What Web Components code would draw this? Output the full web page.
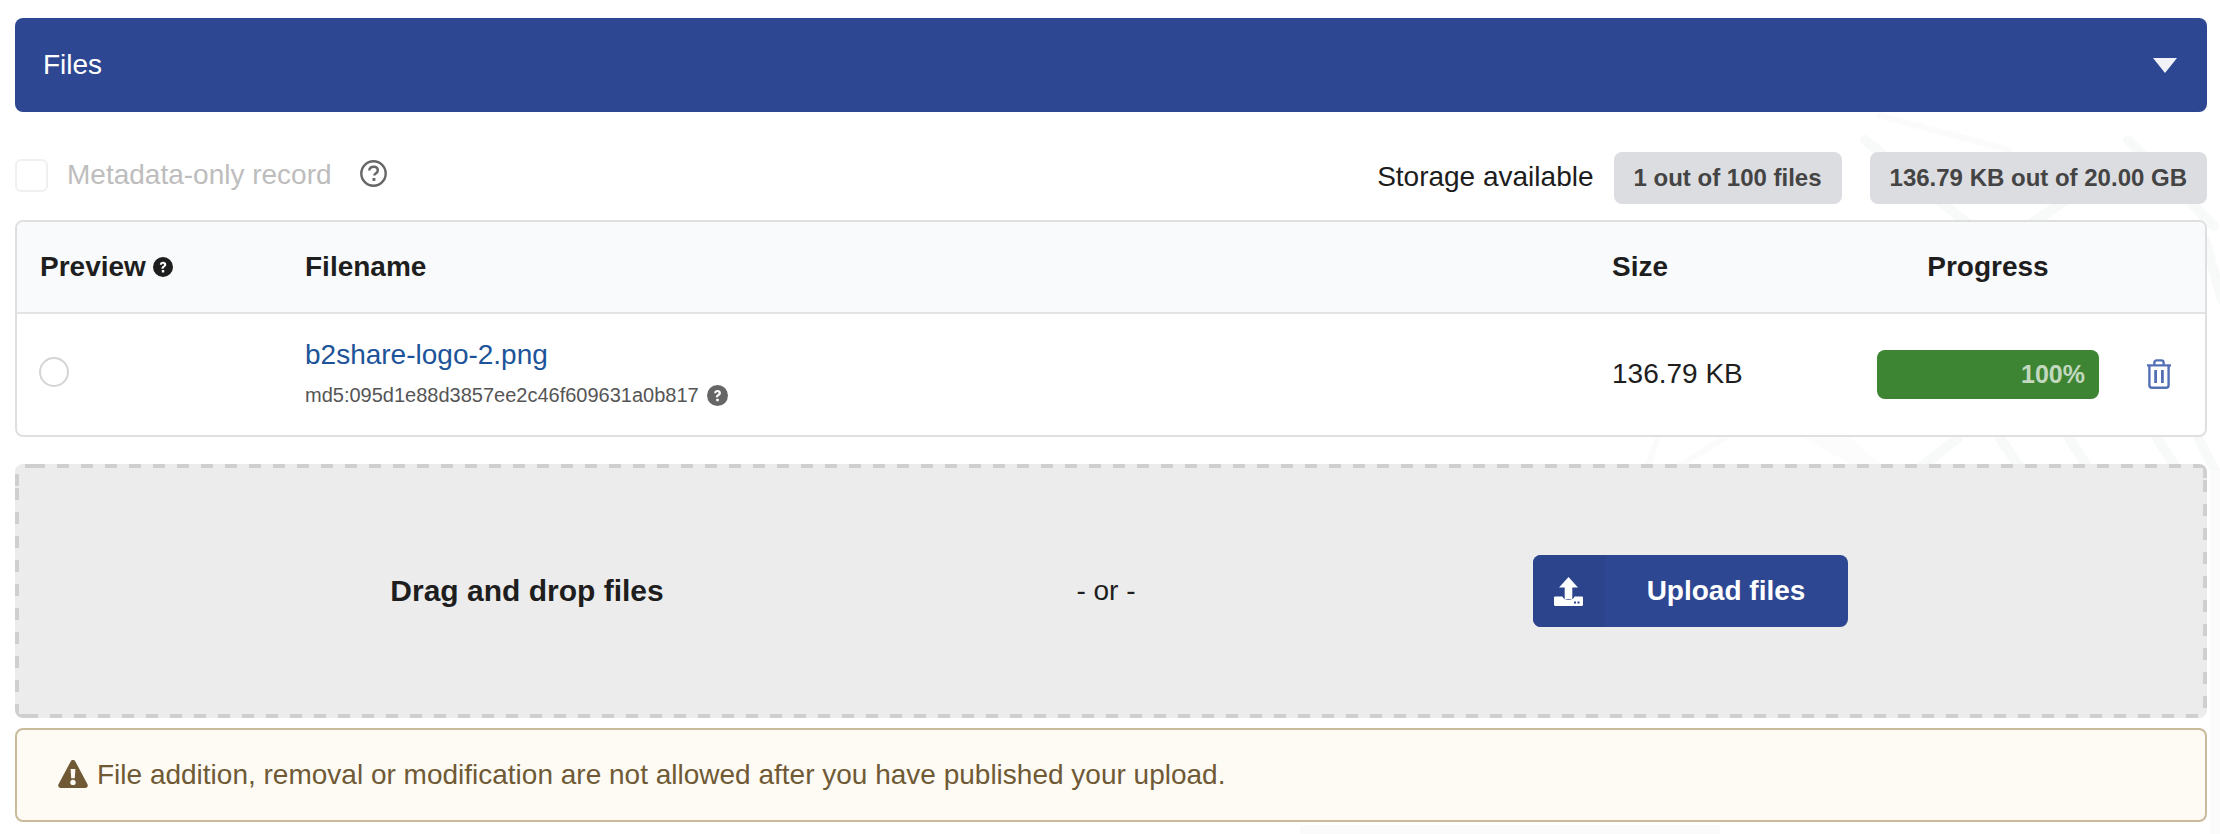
<!DOCTYPE html>
<html>
<head>
<meta charset="utf-8">
<title>Files</title>
<style>
  html, body { margin: 0; background: #fff; }
  body {
    font-family: "Liberation Sans", Arial, sans-serif;
    font-size: 28px;
    color: #1e1e1e;
  }
</style>
</head>
<body>
<files-page>
  <files-header>Files</files-header>
  <files-toolbar></files-toolbar>
  <files-table></files-table>
  <drop-zone></drop-zone>
  <warning-note>File addition, removal or modification are not allowed after you have published your upload.</warning-note>
</files-page>

<script>
const helpIcon = (size, color) => `
  <svg width="${size}" height="${size}" viewBox="0 0 24 24" style="display:block;flex:none">
    <circle cx="12" cy="12" r="12" fill="${color}"/>
    <path d="M8.200 9.400c0-2.200 1.700-3.600 3.900-3.600s3.800 1.300 3.800 3.300c0 1.600-.9 2.400-2 3.100-.9.600-1.200.9-1.200 1.800h-2.600c0-1.700.6-2.400 1.800-3.200.9-.6 1.300-1 1.300-1.600 0-.7-.5-1.200-1.200-1.200-.8 0-1.300.6-1.300 1.400z" fill="#fff"/>
    <rect x="10.600" y="15.600" width="2.900" height="2.900" rx=".6" fill="#fff"/>
  </svg>`;

class FilesPage extends HTMLElement {
  constructor() {
    super();
    this.attachShadow({ mode: 'open' });
  }
  connectedCallback() {
    this.shadowRoot.innerHTML = `
      <style>
        :host { display: block; position: relative; width: 2220px; height: 834px; overflow: hidden; box-sizing: border-box; padding: 18px 13px 0 15px; }
        .watermark { position: absolute; left: 0; top: 0; }
        .wrap { position: relative; display: flex; flex-direction: column; }
      </style>
      <svg class="watermark" width="2220" height="834" viewBox="0 0 2220 834" fill="none" stroke-linecap="round">
        <g stroke="#f8f9f9" stroke-width="10">
          <path d="M1865 140 1968 224"/>
          <path d="M2033 222 2112 170"/>
          <path d="M2128 140 2214 226"/>
          <path d="M1958 438 1920 468"/>
          <path d="M2000 438 2020 468"/>
          <path d="M2069 438 2088 468"/>
          <path d="M2157 438 2176 468"/>
          <path d="M2198 438 2220 480"/>
          <path d="M2205 240 2222 300"/>
        </g>
        <g stroke="#fbfbfb" stroke-width="6">
          <path d="M1658 438 1647 468"/>
          <path d="M1725 438 1675 468"/>
          <path d="M1880 116 2010 150"/>
        </g>
        <path d="M1803 438h47l35 30h-27z" fill="#fcfcfc"/>
        <path d="M1300 825h420v10h-420z" fill="#fafafb"/>
        <path d="M2210 470h10v364h-10z" fill="#fbfbfb"/>
      </svg>
      <div class="wrap"><slot></slot></div>`;
  }
}

class FilesHeader extends HTMLElement {
  constructor() {
    super();
    this.attachShadow({ mode: 'open' });
  }
  connectedCallback() {
    this.shadowRoot.innerHTML = `
      <style>
        :host { display: flex; align-items: center; justify-content: space-between; height: 94px; box-sizing: border-box; padding: 0 28px; background: #2d4792; color: #fff; border-radius: 8px; font-size: 28px; }
        .arrow { width: 0; height: 0; border-left: 12px solid transparent; border-right: 12px solid transparent; border-top: 15px solid #f1f3f9; margin-right: 2px; }
      </style>
      <slot></slot>
      <span class="arrow"></span>`;
  }
}

class FilesToolbar extends HTMLElement {
  constructor() {
    super();
    this.attachShadow({ mode: 'open' });
  }
  connectedCallback() {
    this.shadowRoot.innerHTML = `
      <style>
        :host { display: flex; align-items: center; height: 52px; margin-top: 40px; }
        .check { width: 33px; height: 33px; box-sizing: border-box; border: 2px solid #f0f0f0; border-radius: 6px; background: #fff; margin-top: -6px; }
        .label { color: #bdbdbd; margin-left: 19px; margin-top: -7px; }
        .help { margin-left: 28px; margin-top: -9px; width: 27px; height: 27px; box-sizing: border-box; }
        .spacer { flex: 1; }
        .storage { margin-right: 20px; color: #1c1c1c; margin-top: -3px; }
        .badge { display: flex; align-items: center; height: 52px; box-sizing: border-box; padding: 0 20px; background: #dcdde1; color: #444; font-weight: 700; font-size: 24px; border-radius: 8px; }
        .badge + .badge { margin-left: 28px; }
      </style>
      <span class="check"></span>
      <span class="label">Metadata-only record</span>
      <svg class="help" viewBox="0 0 27 27" fill="none">
        <circle cx="13.500" cy="13.500" r="12.200" stroke="#666" stroke-width="2.400"/>
        <path d="M9.300 10.600c0-2.400 1.800-3.900 4.300-3.900s4.200 1.400 4.200 3.500c0 1.700-.9 2.500-2.100 3.300-1 .7-1.400 1.100-1.400 2.100" stroke="#666" stroke-width="2.500"/>
        <rect x="12.500" y="18" width="2.900" height="2.900" fill="#666"/>
      </svg>
      <span class="spacer"></span>
      <span class="storage">Storage available</span>
      <span class="badge">1 out of 100 files</span>
      <span class="badge">136.79 KB out of 20.00 GB</span>`;
  }
}

class FilesTable extends HTMLElement {
  constructor() {
    super();
    this.attachShadow({ mode: 'open' });
  }
  connectedCallback() {
    this.shadowRoot.innerHTML = `
      <style>
        :host { display: block; margin-top: 16px; border: 2px solid #dfdfdf; border-radius: 8px; background: #fff; overflow: hidden; }
        .row { display: grid; grid-template-columns: 288px 1307px 265px 222px 1fr; align-items: center; }
        .head { height: 90px; background: #f9fafb; border-bottom: 2px solid #e2e3e5; font-weight: 700; color: #1e1e1e; }
        .body { height: 121px; }
        .preview { display: flex; align-items: center; gap: 7px; padding-left: 23px; }
        .radio { display: block; width: 30px; height: 30px; box-sizing: border-box; border: 2px solid #d4d4d5; border-radius: 50%; margin-left: 22px; margin-top: -5px; }
        .file { padding-bottom: 4px; }
        .link { color: #1d5499; line-height: 32px; }
        .md5 { display: flex; align-items: center; gap: 8px; font-size: 20px; color: #555; margin-top: 13px; line-height: 22px; }
        .size { white-space: nowrap; margin-top: -2px; }
        .center { text-align: center; }
        .bar { height: 49px; box-sizing: border-box; padding-right: 14px; display: flex; align-items: center; justify-content: flex-end; background: #3d8433; color: rgba(255,255,255,.7); font-weight: 700; font-size: 25px; border-radius: 8px; }
        .trash { margin-left: 48px; display: block; margin-top: -2px; }
      </style>
      <div class="row head">
        <div class="preview">Preview ${helpIcon(20, '#1e1e1e')}</div>
        <div>Filename</div>
        <div>Size</div>
        <div class="center">Progress</div>
      </div>
      <div class="row body">
        <div><span class="radio"></span></div>
        <div class="file">
          <div class="link">b2share-logo-2.png</div>
          <div class="md5">md5:095d1e88d3857ee2c46f609631a0b817 ${helpIcon(21, '#666')}</div>
        </div>
        <div class="size">136.79 KB</div>
        <div class="bar">100%</div>
        <svg class="trash" width="24" height="30" viewBox="0 0 24 30" fill="none" stroke="#5470b5" stroke-width="2.400">
          <path d="M0 6.400h24"/>
          <path d="M7.400 6V3.600c0-1.300.9-2.200 2.200-2.200h4.800c1.300 0 2.200.9 2.200 2.200V6"/>
          <path d="M2.400 6.400v19.800c0 1.600 1 2.600 2.600 2.600h14c1.600 0 2.600-1 2.600-2.600V6.400"/>
          <path d="M8.600 11v13M15.400 11v13" stroke-width="2.800"/>
        </svg>
      </div>`;
  }
}

class DropZone extends HTMLElement {
  constructor() {
    super();
    this.attachShadow({ mode: 'open' });
  }
  connectedCallback() {
    this.shadowRoot.innerHTML = `
      <style>
        :host {
          display: grid;
          grid-template-columns: 1024px 1fr 1034px;
          align-items: center;
          justify-items: center;
          height: 254px;
          margin-top: 27px;
          border-radius: 8px;
          background-color: #ececec;
          background-image:
            repeating-linear-gradient(90deg, #cfcfcf 0 12px, transparent 12px 24px),
            repeating-linear-gradient(90deg, #cfcfcf 0 12px, transparent 12px 24px),
            repeating-linear-gradient(0deg, #cfcfcf 0 12px, transparent 12px 24px),
            repeating-linear-gradient(0deg, #cfcfcf 0 12px, transparent 12px 24px);
          background-size: 100% 4px, 100% 4px, 4px 100%, 4px 100%;
          background-position: 18px 0, 11px 100%, 0 22px, 100% 14px;
          background-repeat: repeat-x, repeat-x, repeat-y, repeat-y;
        }
        .drag { font-weight: 700; font-size: 30px; color: #1e1e1e; }
        .or { color: #1e1e1e; font-size: 28px; }
        .button { display: flex; width: 315px; height: 72px; border-radius: 8px; overflow: hidden; background: #2d4792; color: #fff; font-weight: 700; }
        .icon { flex: none; width: 72px; background: #2b448c; display: flex; align-items: center; justify-content: center; }
        .text { flex: 1; display: flex; align-items: center; justify-content: center; }
      </style>
      <span class="drag">Drag and drop files</span>
      <span class="or">- or -</span>
      <span class="button">
        <span class="icon">
          <svg width="29" height="29" viewBox="0 0 29 29" fill="#fff">
            <path d="M14.500 0 24 10.500H18.300V22H10.700V10.500H5z"/>
            <path d="M1.200 19.500h7.300c.6 2.200 2.700 3.300 6 3.300s5.400-1.100 6-3.300h7.300c.7 0 1.200.5 1.200 1.200v7.100c0 .7-.5 1.200-1.200 1.200H1.200C.5 29 0 28.500 0 27.800v-7.100c0-.7.5-1.200 1.200-1.200z"/>
            <rect x="20" y="24.500" width="2" height="2" fill="#2b448c"/>
            <rect x="23.500" y="24.500" width="2" height="2" fill="#2b448c"/>
          </svg>
        </span>
        <span class="text">Upload files</span>
      </span>`;
  }
}

class WarningNote extends HTMLElement {
  constructor() {
    super();
    this.attachShadow({ mode: 'open' });
  }
  connectedCallback() {
    this.shadowRoot.innerHTML = `
      <style>
        :host { display: flex; align-items: center; gap: 9px; height: 94px; box-sizing: border-box; margin-top: 10px; padding: 0 0 0 41px; background: #fefbf5; border: 2px solid #c9ba9b; border-radius: 8px; color: #6f5a35; }
        svg { flex: none; display: block; margin-top: -2px; }
      </style>
      <svg width="30" height="28" viewBox="0 0 30 28">
        <path fill-rule="evenodd" fill="#6f5a35" d="M15 0c1 0 1.800.5 2.300 1.400l12.200 22.800c.9 1.700-.3 3.800-2.300 3.800H2.800c-2 0-3.200-2.100-2.300-3.800L12.700 1.400C13.200.5 14 0 15 0zM12.600 9l.6 9.200h3.600l.6-9.200zM15 19.700a2.700 2.700 0 1 0 0 5.400 2.700 2.700 0 0 0 0-5.400z"/>
      </svg>
      <slot></slot>`;
  }
}

customElements.define('files-page', FilesPage);
customElements.define('files-header', FilesHeader);
customElements.define('files-toolbar', FilesToolbar);
customElements.define('files-table', FilesTable);
customElements.define('drop-zone', DropZone);
customElements.define('warning-note', WarningNote);
</script>
</body>
</html>
